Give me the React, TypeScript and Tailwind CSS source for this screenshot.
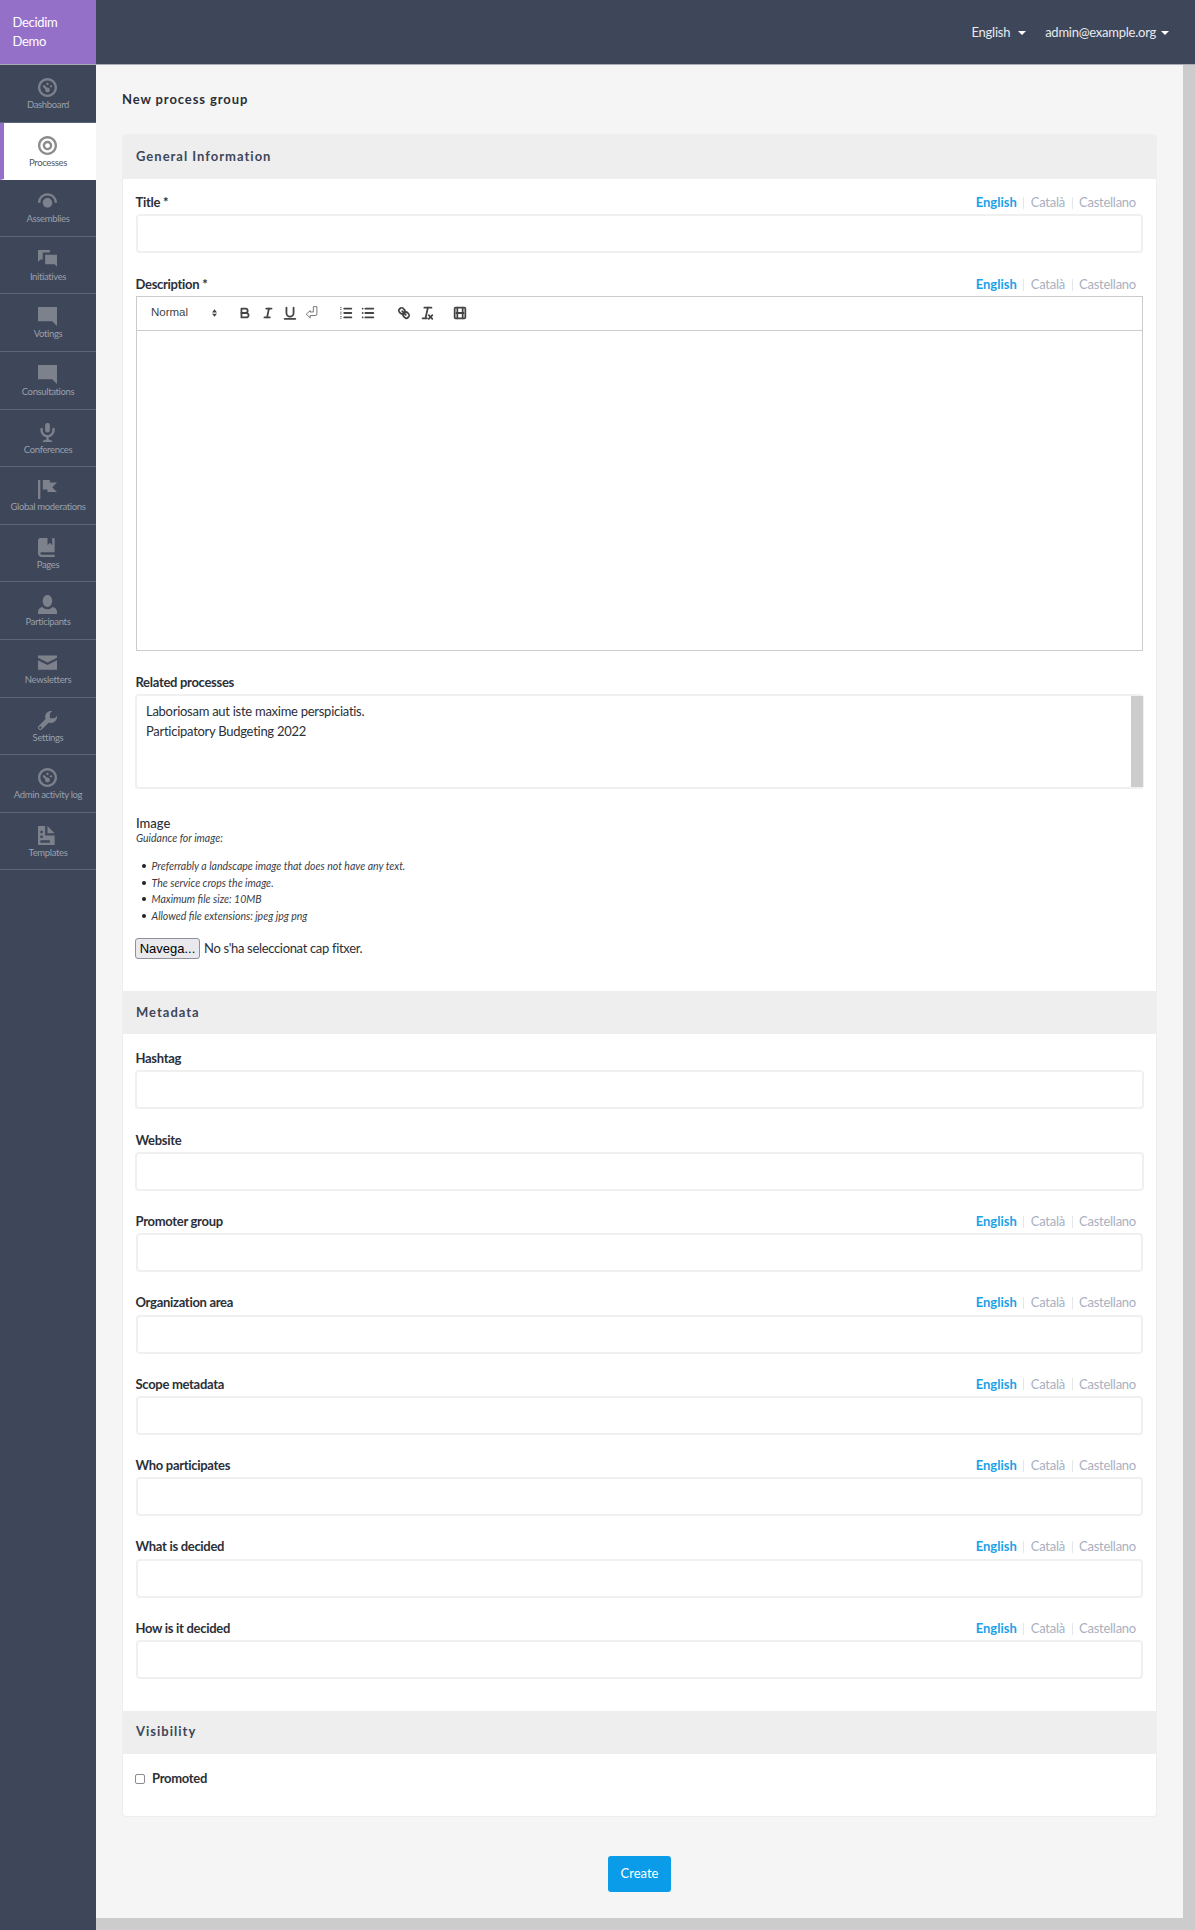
import { ReactNode } from 'react';

const icons: Record<string, string> = {
  dashboard:
    'M4 0c-2.2 0-4 1.8-4 4s1.8 4 4 4 4-1.8 4-4-1.8-4-4-4zm0 1c1.66 0 3 1.34 3 3s-1.34 3-3 3-3-1.34-3-3 1.34-3 3-3zm0 1c-.28 0-.5.22-.5.5s.22.5.5.5.5-.22.5-.5-.22-.5-.5-.5zm-1.66 1a.5.5 0 0 0-.19.84l.91.91c-.02.08-.06.16-.06.25 0 .55.45 1 1 1s1-.45 1-1-.45-1-1-1c-.09 0-.17.04-.25.06l-.91-.91a.5.5 0 0 0-.44-.16.5.5 0 0 0-.06 0zm3.16 0c-.28 0-.5.22-.5.5s.22.5.5.5.5-.22.5-.5-.22-.5-.5-.5z',
  target:
    'M4 0c-2.2 0-4 1.8-4 4s1.8 4 4 4 4-1.8 4-4-1.8-4-4-4zm0 1c1.66 0 3 1.34 3 3s-1.34 3-3 3-3-1.34-3-3 1.34-3 3-3zm0 1c-1.1 0-2 .9-2 2s.9 2 2 2 2-.9 2-2-.9-2-2-2zm0 1c.56 0 1 .44 1 1s-.44 1-1 1-1-.44-1-1 .44-1 1-1z',
  dome: 'M4 .5C1.8.5 0 2.3 0 4.5h1c0-1.7 1.3-3 3-3s3 1.3 3 3h1C8 2.3 6.2.5 4 .5zM4 2.5c-1.1 0-2 .9-2 2 0 .9.5 1.6 1.2 1.9.5.2 1.1.2 1.6 0C5.5 6.1 6 5.4 6 4.5c0-1.1-.9-2-2-2z',
  chat: 'M0 0v5l1-1h1v-3h3v-1h-5zm3 2v4h4l1 1v-5h-5z',
  comment:
    'M.09 0c-.06 0-.09.04-.09.09v5.81c0 .05.04.09.09.09h5.91l2 2v-7.91c0-.06-.04-.09-.09-.09h-7.81z',
  mic: 'M3.91-.03a1 1 0 0 0-.13.03 1 1 0 0 0-.78 1v2a1 1 0 1 0 2 0v-2a1 1 0 0 0-1.09-1.03zm-2.56 2.03a.5.5 0 0 0-.34.5v.5c0 1.48 1.09 2.69 2.5 2.94v1.06h-.5c-.55 0-1 .45-1 1h4.01c0-.55-.45-1-1-1h-.5v-1.06c1.41-.24 2.5-1.46 2.5-2.94v-.5a.5.5 0 1 0-1 0v.5c0 1.11-.89 2-2 2-1.11 0-2-.89-2-2v-.5a.5.5 0 0 0-.59-.5.5.5 0 0 0-.06 0z',
  flag: 'M0 0v8h1v-8h-1zm2 0v4h2v1h4l-2-1.97 2-2.03h-3v-1h-3z',
  book: 'M1 0c-.07 0-.13.01-.19.03-.39.08-.7.39-.78.78-.03.06-.03.12-.03.19v5.5c0 .83.67 1.5 1.5 1.5h5.5v-1h-5.5c-.28 0-.5-.22-.5-.5s.22-.5.5-.5h5.5v-5.5c0-.28-.22-.5-.5-.5h-.5v3l-1-1-1 1v-3h-3z',
  person:
    'M4 0c-1.1 0-2 1.12-2 2.5s.9 2.5 2 2.5 2-1.12 2-2.5-.9-2.5-2-2.5zm-2.09 5c-1.06.05-1.91.92-1.91 2v1h8v-1c0-1.08-.84-1.95-1.91-2-.54.61-1.28 1-2.09 1-.81 0-1.55-.39-2.09-1z',
  envelope: 'M0 1v1l4 2 4-2v-1h-8zm0 2v4h8v-4l-4 2-4-2z',
  wrench:
    'M5.5 0c-1.38 0-2.5 1.12-2.5 2.5 0 .32.08.62.19.91l-2.91 2.88c-.39.39-.39 1.05 0 1.44.2.2.46.28.72.28.26 0 .52-.09.72-.28l2.88-2.91c.28.11.58.19.91.19 1.38 0 2.5-1.12 2.5-2.5 0-.16 0-.32-.03-.47l-.97.97h-2v-2l.97-.97c-.15-.03-.31-.03-.47-.03zm-4.5 6.5c.28 0 .5.22.5.5s-.22.5-.5.5-.5-.22-.5-.5.22-.5.5-.5z',
  file: 'M0 0v8h7v-4h-4v-4h-3zm4 0v3h3l-3-3zm-3 2h1v1h-1v-1zm0 2h1v1h-1v-1zm0 2h4v1h-4v-1z',
};

const menu = [
  { label: 'Dashboard', icon: 'dashboard' },
  { label: 'Processes', icon: 'target', active: true },
  { label: 'Assemblies', icon: 'dome' },
  { label: 'Initiatives', icon: 'chat' },
  { label: 'Votings', icon: 'comment' },
  { label: 'Consultations', icon: 'comment' },
  { label: 'Conferences', icon: 'mic' },
  { label: 'Global moderations', icon: 'flag' },
  { label: 'Pages', icon: 'book' },
  { label: 'Participants', icon: 'person' },
  { label: 'Newsletters', icon: 'envelope' },
  { label: 'Settings', icon: 'wrench' },
  { label: 'Admin activity log', icon: 'dashboard' },
  { label: 'Templates', icon: 'file' },
];

function Caret() {
  return <span className="inline-block w-0 h-0 border-x-[4px] border-x-transparent border-t-[4px] border-t-white" />;
}

function MenuItem({ label, icon, active }: { label: string; icon: string; active?: boolean }) {
  return (
    <a
      className={`h-[57.6px] flex flex-col items-center pt-[13px] border-b ${
        active
          ? 'bg-white border-l-4 border-l-[#9570c8] border-b-transparent pr-[4px] -mb-px'
          : 'border-b-[#5b6478]'
      }`}
    >
      <svg viewBox="0 0 8 8" className={`w-[19px] h-[19px] -ml-px ${active ? 'fill-[#8c8c8c]' : 'fill-[#7d818c]'}`}>
        <path d={icons[icon]} />
      </svg>
      <span
        className={`mt-px text-[9.5px] leading-[14px] tracking-[-0.35px] whitespace-nowrap ${
          active ? 'text-[#4f5565]' : 'text-[#9aa0ac]'
        }`}
      >
        {label}
      </span>
    </a>
  );
}

function LangTabs() {
  return (
    <div className="flex items-center text-[13px] pr-[7px]">
      <span className="font-bold text-[#1ba1e8]">English</span>
      <span className="mx-[6.5px] w-px h-[12px] bg-[#e4e6ea]" />
      <span className="text-[#a9b0bf] tracking-[-0.25px]">Català</span>
      <span className="mx-[6.5px] w-px h-[12px] bg-[#e4e6ea]" />
      <span className="text-[#a9b0bf] tracking-[-0.25px]">Castellano</span>
    </div>
  );
}

function FieldLabel({ children, tabs }: { children: ReactNode; tabs?: boolean }) {
  return (
    <div className="h-[23px] flex items-center justify-between">
      <label className="-ml-[0.5px] text-[13px] font-bold tracking-[-0.3px] text-[#2c2f38]">{children}</label>
      {tabs && <LangTabs />}
    </div>
  );
}

function TextField({ label, tabs, first }: { label: string; tabs?: boolean; first?: boolean }) {
  return (
    <div className={first ? 'mb-[20px]' : 'mb-[19.4px]'}>
      <FieldLabel tabs={tabs}>{label}</FieldLabel>
      <input
        className={`block h-[39px] border-2 border-[#f0f0f0] rounded-[4px] bg-white ${
          tabs ? 'w-full' : '-mx-px w-[calc(100%+2px)]'
        }`}
      />
    </div>
  );
}

function SectionHeader({ title, rounded }: { title: string; rounded?: boolean }) {
  return (
    <div
      className={`h-[43px] flex items-center px-[13px] bg-[#eeeeee] text-[13px] font-bold tracking-[1px] text-[#3e4659] ${
        rounded ? 'rounded-t-[4px] h-[45px]' : ''
      }`}
    >
      {title}
    </div>
  );
}

function QuillIcon({ children, className }: { children: ReactNode; className: string }) {
  return (
    <svg
      viewBox="0 0 18 18"
      className={`w-[16px] h-[16px] fill-none stroke-[#444] stroke-2 ${className}`}
      strokeLinecap="round"
      strokeLinejoin="round"
    >
      {children}
    </svg>
  );
}

function EditorToolbar() {
  return (
    <div className="h-[34px] pb-[2px] flex items-center border-b border-[#cccccc] text-[#444]">
      <span className="ml-[14px] w-[61px] text-[11.5px] font-['Liberation_Sans',sans-serif]">Normal</span>
      <svg viewBox="0 0 8 12" className="w-[5px] h-[8px] fill-[#444]">
        <path d="M4 0l4 5H0zM4 12l4-5H0z" />
      </svg>
      <QuillIcon className="ml-[20px]">
        <path d="M5,4H9.5A2.5,2.5,0,0,1,12,6.5v0A2.5,2.5,0,0,1,9.5,9H5V4Z" />
        <path d="M5,9h5.5A2.5,2.5,0,0,1,13,11.5v0A2.5,2.5,0,0,1,10.5,14H5V9Z" />
      </QuillIcon>
      <QuillIcon className="ml-[7px]">
        <line x1="7" x2="13" y1="4" y2="4" />
        <line x1="5" x2="11" y1="14" y2="14" />
        <line x1="8" x2="10" y1="14" y2="4" />
      </QuillIcon>
      <QuillIcon className="ml-[6px]">
        <path d="M5,3V9a4,4,0,0,0,4,4h0a4,4,0,0,0,4-4V3" />
        <line x1="3" x2="15" y1="15.5" y2="15.5" />
      </QuillIcon>
      <svg viewBox="0 0 18 18" className="ml-[6px] -mt-[2px] w-[16px] h-[16px] fill-none stroke-[#555] stroke-[0.9]">
        <path d="M7 7.5 2.5 11.5 7 15.5V13h5.5q2 0 2-2V3h-4v6H7z" />
      </svg>
      <QuillIcon className="ml-[18px]">
        <line x1="7" x2="15" y1="4" y2="4" />
        <line x1="7" x2="15" y1="9" y2="9" />
        <line x1="7" x2="15" y1="14" y2="14" />
        <line x1="3" x2="3.5" y1="3" y2="3" className="stroke-1" />
        <line x1="3" x2="3.5" y1="5" y2="5" className="stroke-1" />
        <line x1="3" x2="3.5" y1="8" y2="8" className="stroke-1" />
        <line x1="3" x2="3.5" y1="10" y2="10" className="stroke-1" />
        <line x1="3" x2="3.5" y1="13" y2="13" className="stroke-1" />
        <line x1="3" x2="3.5" y1="15" y2="15" className="stroke-1" />
      </QuillIcon>
      <QuillIcon className="ml-[6px]">
        <line x1="6" x2="15" y1="4" y2="4" />
        <line x1="6" x2="15" y1="9" y2="9" />
        <line x1="6" x2="15" y1="14" y2="14" />
        <line x1="3" x2="3" y1="4" y2="4" />
        <line x1="3" x2="3" y1="9" y2="9" />
        <line x1="3" x2="3" y1="14" y2="14" />
      </QuillIcon>
      <QuillIcon className="ml-[20px]">
        <line x1="7" x2="11" y1="7" y2="11" />
        <path d="M8.9,4.577a3.476,3.476,0,0,1,.36,4.679A3.476,3.476,0,0,1,4.577,8.9C3.185,7.5,2.035,6.4,4.217,4.217S7.5,3.185,8.9,4.577Z" />
        <path d="M13.423,9.1a3.476,3.476,0,0,0-4.679-.36,3.476,3.476,0,0,0,.36,4.679c1.392,1.392,2.5,2.542,4.679.36S14.815,10.5,13.423,9.1Z" />
      </QuillIcon>
      <QuillIcon className="ml-[7px]">
        <line x1="6" x2="14" y1="3" y2="3" />
        <line x1="10" x2="7.5" y1="3" y2="14" />
        <line x1="4" x2="9" y1="15" y2="15" />
        <line x1="11" x2="15" y1="11.5" y2="15.5" />
        <line x1="15" x2="11" y1="11.5" y2="15.5" />
      </QuillIcon>
      <QuillIcon className="ml-[17px]">
        <rect x="3" y="3" width="12" height="12" rx="1" />
        <line x1="5" x2="13" y1="9" y2="9" />
        <line x1="6" x2="6" y1="3" y2="15" />
        <line x1="12" x2="12" y1="3" y2="15" />
      </QuillIcon>
    </div>
  );
}

const imageNotes = [
  'Preferrably a landscape image that does not have any text.',
  'The service crops the image.',
  'Maximum file size: 10MB',
  'Allowed file extensions: jpeg jpg png',
];

export default function App() {
  return (
    <div className="w-[1195px] h-[1930px] flex flex-col overflow-hidden font-['Lato',sans-serif] bg-[#3e4659]">
      <header className="h-[65px] shrink-0 flex items-stretch border-b border-[#a8acb4]">
        <div className="w-[96px] bg-[#9570c8] px-[12.5px] flex items-center text-[13px] leading-[19px] tracking-[-0.3px] text-white">
          <span>
            Decidim
            <br />
            Demo
          </span>
        </div>
        <div className="flex-1 flex items-center justify-end pr-[26px] pt-px text-[13px] tracking-[-0.25px] text-[#e8eaee]">
          <span className="mr-[8px]">English</span>
          <Caret />
          <span className="ml-[19px] mr-[5px]">admin@example.org</span>
          <Caret />
        </div>
      </header>

      <div className="flex-1 flex min-h-0">
        <nav className="w-[96px] shrink-0">
          {menu.map((item) => (
            <MenuItem key={item.label} {...item} />
          ))}
        </nav>

        <div className="flex-1 flex flex-col min-w-0 bg-[#cccccc]">
          <div className="flex-1 flex min-h-0">
            <main className="flex-1 min-w-0 bg-[#f5f5f5] pl-[26px] pr-[26px] pt-[27px]">
              <h1 className="h-[16px] flex items-center text-[13px] font-bold tracking-[0.9px] text-[#2c2f38]">
                New process group
              </h1>
              <section className="mt-[26px] bg-white rounded-[4px] border-x border-b border-[#eeeeee]">
                <SectionHeader title="General Information" rounded />
                <div className="px-[13px] pt-[12px] pb-[32px]">
                  <TextField label="Title *" tabs first />

                  <FieldLabel tabs>Description *</FieldLabel>
                  <div className="h-[355px] border border-[#cccccc]">
                    <EditorToolbar />
                  </div>

                  <div className="mt-[20px]">
                    <FieldLabel>Related processes</FieldLabel>
                  </div>
                  <div className="-mx-px h-[95px] flex justify-between border-2 border-[#f0f0f0] rounded-[4px] text-[13px] leading-[20px] tracking-[-0.27px] text-[#2c2f38]">
                    <div className="pl-[9px] pt-[5px]">
                      <div>Laboriosam aut iste maxime perspiciatis.</div>
                      <div>Participatory Budgeting 2022</div>
                    </div>
                    <div className="w-[12px] -mr-px bg-[#cccccc]" />
                  </div>

                  <div className="mt-[24px] text-[13px] leading-[20px] font-medium text-[#2c2f38]">Image</div>
                  <p className="text-[10.5px] leading-[11px] italic text-[#3a3d47]">Guidance for image:</p>
                  <ul className="mt-[14px] text-[10.5px] leading-[16.6px] italic text-[#3a3d47]">
                    {imageNotes.map((note) => (
                      <li key={note} className="flex items-center pl-[6px]">
                        <span className="w-[4px] h-[4px] mr-[5.5px] rounded-full bg-[#222]" />
                        {note}
                      </li>
                    ))}
                  </ul>
                  <div className="mt-[13px] -ml-px flex items-center h-[22px] text-[13px] tracking-[-0.33px] text-[#2c2f38]">
                    <button className="h-[21px] w-[65px] mr-[4px] rounded-[3px] border border-[#8f8f9d] bg-[#e9e9ed] text-[13px] tracking-normal text-black font-['Liberation_Sans',sans-serif]">
                      Navega...
                    </button>
                    No s'ha seleccionat cap fitxer.
                  </div>
                </div>

                <SectionHeader title="Metadata" />
                <div className="px-[13px] pt-[13px] pb-[12px]">
                  <TextField label="Hashtag" />
                  <TextField label="Website" />
                  <TextField label="Promoter group" tabs />
                  <TextField label="Organization area" tabs />
                  <TextField label="Scope metadata" tabs />
                  <TextField label="Who participates" tabs />
                  <TextField label="What is decided" tabs />
                  <TextField label="How is it decided" tabs />
                </div>

                <SectionHeader title="Visibility" />
                <div className="h-[62px] px-[13px] pt-[17px] flex items-start">
                  <label className="flex items-center h-[16px] text-[13px] font-bold tracking-[-0.3px] text-[#2c2f38]">
                    <input type="checkbox" className="w-[10px] h-[10px] -ml-px mr-[7px] appearance-none border border-[#8a8a96] rounded-[2px] bg-white" />
                    Promoted
                  </label>
                </div>
              </section>
              <div className="mt-[39px] flex justify-center">
                <button className="w-[63px] h-[36px] rounded-[3px] bg-[#0a9ce8] text-[13px] text-white">Create</button>
              </div>
            </main>
            <div className="w-[12px] shrink-0" />
          </div>
          <div className="h-[12px] shrink-0" />
        </div>
      </div>
    </div>
  );
}
